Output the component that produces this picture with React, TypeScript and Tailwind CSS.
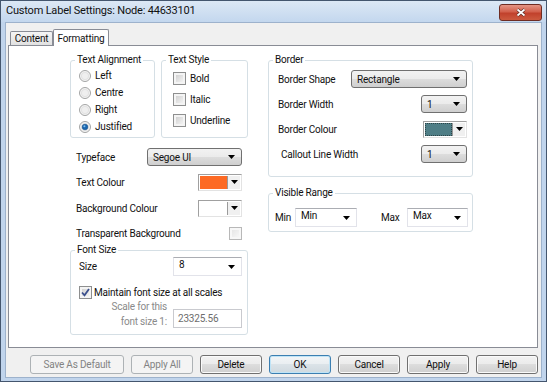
import React from "react";

const combo =
  "border border-[#707070] rounded-[3px] bg-[linear-gradient(#f2f2f2_0%,#ebebeb_50%,#dddddd_50%,#cfcfcf_100%)]";

const Arrow = () => (
  <svg width="7" height="4" viewBox="0 0 7 4" className="shrink-0">
    <path d="M0 0h7L3.5 4z" fill="#000" />
  </svg>
);

const Combo = ({ value, className }: { value: string; className: string }) => (
  <div className={`h-[18px] flex items-center justify-between pl-[5px] pr-[6px] ${combo} ${className}`}>
    <span>{value}</span>
    <Arrow />
  </div>
);

// editable combo: white box, text sits high
const EditCombo = ({ value, className }: { value: string; className: string }) => (
  <div className={`h-[19px] flex justify-between pl-[5px] pr-[6px] bg-white border border-[#e2e3ea] border-t-[#abadb3] ${className}`}>
    <span className="leading-[14px]">{value}</span>
    <div className="flex items-center">
      <Arrow />
    </div>
  </div>
);

const ColourCombo = ({ swatch }: { swatch: string }) => (
  <div className="w-[44px] h-[17px] flex border border-[#a0a0a0] border-r-[#e3e3e3] border-b-[#e3e3e3] bg-white p-px">
    <div className={`flex-1 ${swatch}`} />
    <div className="w-[13px] flex items-center justify-center bg-[#f0f0f0] border-l border-[#9a9a9a]">
      <Arrow />
    </div>
  </div>
);

const Radio = ({ checked }: { checked?: boolean }) => (
  <svg width="12" height="12" viewBox="0 0 12 12" className="shrink-0">
    <circle cx="6" cy="6" r="5.5" fill="#f4f4f4" stroke="#a3a4a4" />
    <circle cx="6" cy="6" r="4" fill="#e2e2e2" />
    <circle cx="6" cy="6" r="3" fill="#efefef" />
    {checked && <circle cx="6" cy="6" r="2.8" fill="#1b67b0" stroke="#0d4a87" strokeWidth="0.6" />}
    {checked && <circle cx="5.4" cy="5.3" r="1" fill="#7fc0f0" />}
  </svg>
);

const Check = ({ checked, faded }: { checked?: boolean; faded?: boolean }) => (
  <div
    className={`w-[13px] h-[13px] shrink-0 border p-[2px] ${
      faded ? "border-[#b8b8b8] bg-[#f7f7f7]" : "border-[#8e8f8f] bg-[#f4f4f4]"
    }`}
  >
    <div
      className={`w-full h-full relative ${
        faded ? "bg-[linear-gradient(135deg,#e6e6e6,#f6f6f6)]" : "bg-[linear-gradient(135deg,#d2d2d2,#f2f2f2)]"
      }`}
    >
      {checked && (
        <svg width="11" height="11" viewBox="0 0 11 11" className="absolute -left-[2px] -top-[2px]">
          <path d="M2 5.5l2.5 2.8L9 2" fill="none" stroke="#3a4f8c" strokeWidth="1.8" />
        </svg>
      )}
    </div>
  </div>
);

const Group = ({ title, className, children }: { title: string; className: string; children: React.ReactNode }) => (
  <fieldset className={`border border-[#d5dfe5] rounded-[3px] ${className}`}>
    <legend className="ml-[4px] px-[2px] leading-[14px]">{title}</legend>
    {children}
  </fieldset>
);

const Btn = ({ label, className, kind }: { label: string; className: string; kind?: "off" | "default" }) => {
  let look = `${combo} shadow-[inset_0_0_0_1px_#fafafa]`;
  if (kind === "off") look = "border border-[#adb2b5] rounded-[3px] bg-[#f4f4f4] text-[#838383]";
  if (kind === "default")
    look =
      "border border-[#3c7fb1] rounded-[3px] bg-[linear-gradient(#f2f5f7_0%,#e9eef1_50%,#dbe3e8_50%,#cfd9df_100%)] shadow-[inset_0_0_0_1px_#bfe4f7]";
  return <div className={`h-[19px] flex items-center justify-center ${look} ${className}`}>{label}</div>;
};

export default function App() {
  return (
    <div className="w-[547px] h-[382px] flex flex-col bg-[#c0d4ec] border border-[#44566e] font-['Roboto',sans-serif] text-[10px] tracking-[-0.2px] text-[#111]">
      {/* title bar */}
      <div className="h-[21px] flex items-center justify-between pl-[5px] pr-[4px] bg-[linear-gradient(#dce8f5,#c3d7ee)]">
        <span className="text-[11px]">Custom Label Settings: Node: 44633101</span>
        <div className="w-[43px] h-[17px] mt-[2px] flex items-center justify-center rounded-[3px] border border-[#6e2c22] bg-[linear-gradient(#e49585_0%,#d2604c_45%,#c1412c_55%,#cc5a3f_100%)]">
          <svg width="10" height="9" viewBox="0 0 10 9">
            <path d="M1.5 1.5l7 6M8.5 1.5l-7 6" stroke="#5a2a22" strokeWidth="3" />
            <path d="M1.5 1.5l7 6M8.5 1.5l-7 6" stroke="#fff" strokeWidth="1.7" />
          </svg>
        </div>
      </div>

      <div className="flex-1 mx-[4px] mb-[3px] flex flex-col bg-[#f0f0f0] border border-[#9db2cc] pl-[2px] pr-[3px] pt-[6px]">
        {/* tabs */}
        <div className="h-[16px] flex items-end ml-[2px]">
          <div className="w-[43px] h-[14px] flex items-center justify-center border border-b-0 border-[#898c95] rounded-t-[2px] bg-[linear-gradient(#f5f5f5,#e1e1e1)]">
            Content
          </div>
          <div className="w-[56px] h-[17px] -mb-px relative z-10 flex items-center justify-center border border-b-0 border-[#898c95] rounded-t-[2px] bg-white">
            Formatting
          </div>
        </div>

        <div className="h-[303px] border border-[#898c95] bg-white flex gap-[20px] pl-[61px] pt-[7px]">
          {/* left column */}
          <div className="w-[178px] flex flex-col">
            <div className="flex gap-[6px]">
              <Group title="Text Alignment" className="w-[85px]">
                <div className="pl-[8px] pb-[2px]">
                  {["Left", "Centre", "Right", "Justified"].map((l) => (
                    <div key={l} className="h-[17px] flex items-center gap-[4px]">
                      <Radio checked={l === "Justified"} />
                      <span>{l}</span>
                    </div>
                  ))}
                </div>
              </Group>
              <Group title="Text Style" className="w-[87px]">
                <div className="pl-[11px] pt-[1px] pb-[6px]">
                  {["Bold", "Italic", "Underline"].map((l) => (
                    <div key={l} className="h-[21px] flex items-center gap-[4px]">
                      <Check />
                      <span>{l}</span>
                    </div>
                  ))}
                </div>
              </Group>
            </div>

            <div className="px-[6px]">
              <div className="mt-[10px] h-[18px] flex items-center justify-between">
                <span>Typeface</span>
                <Combo value="Segoe UI" className="w-[95px]" />
              </div>
              <div className="mt-[7px] h-[18px] flex items-center justify-between">
                <span>Text Colour</span>
                <ColourCombo swatch="bg-[#fd6a24]" />
              </div>
              <div className="mt-[8px] h-[18px] flex items-center justify-between">
                <span>Background Colour</span>
                <ColourCombo swatch="bg-white" />
              </div>
              <div className="mt-[9px] h-[14px] flex items-center justify-between">
                <span>Transparent Background</span>
                <Check faded />
              </div>
            </div>

            <Group title="Font Size" className="mt-[3px]">
              <div className="pl-[8px] pr-[5px] pb-[6px]">
                <div className="h-[19px] flex items-center justify-between">
                  <span>Size</span>
                  <EditCombo value="8" className="w-[69px]" />
                </div>
                <div className="mt-[10px] h-[13px] flex items-center gap-[2px]">
                  <Check checked />
                  <span>Maintain font size at all scales</span>
                </div>
                <div className="mt-[10px] h-[19px] flex justify-end gap-[6px]">
                  <div className="-mt-[10px] text-right leading-[15px] text-[#8a8a8a]">
                    Scale for this
                    <br />
                    font size 1:
                  </div>
                  <div className="w-[69px] h-[19px] flex items-center pl-[4px] border border-[#c9cacf] text-[#6d6d6d]">
                    23325.56
                  </div>
                </div>
              </div>
            </Group>
          </div>

          {/* right column */}
          <div className="w-[205px] flex flex-col">
            <Group title="Border" className="">
              <div className="pl-[9px] pr-[5px] pt-[3px] pb-[13px] flex flex-col gap-[7px]">
                <div className="h-[18px] flex items-center justify-between">
                  <span>Border Shape</span>
                  <Combo value="Rectangle" className="w-[116px]" />
                </div>
                <div className="h-[18px] flex items-center justify-between">
                  <span>Border Width</span>
                  <Combo value="1" className="w-[46px]" />
                </div>
                <div className="h-[18px] flex items-center justify-between">
                  <span>Border Colour</span>
                  <ColourCombo swatch="bg-[#4f7e86] outline outline-1 outline-dotted outline-[#2d4448] -outline-offset-1" />
                </div>
                <div className="h-[18px] flex items-center justify-between">
                  <span className="ml-[3px]">Callout Line Width</span>
                  <Combo value="1" className="w-[46px]" />
                </div>
              </div>
            </Group>

            <Group title="Visible Range" className="mt-[9px]">
              <div className="pl-[6px] pt-[8px] pb-[4px] flex items-center">
                <span className="w-[20px]">Min</span>
                <EditCombo value="Min" className="w-[62px]" />
                <span className="ml-[24px] w-[26px]">Max</span>
                <EditCombo value="Max" className="w-[61px]" />
              </div>
            </Group>
          </div>
        </div>

        {/* buttons */}
        <div className="mt-[7px] flex justify-end gap-[7px]">
          <Btn label="Save As Default" kind="off" className="w-[94px]" />
          <Btn label="Apply All" kind="off" className="w-[62px]" />
          <Btn label="Delete" className="w-[62px]" />
          <Btn label="OK" kind="default" className="w-[62px]" />
          <Btn label="Cancel" className="w-[62px]" />
          <Btn label="Apply" className="w-[62px]" />
          <Btn label="Help" className="w-[62px]" />
        </div>
      </div>
    </div>
  );
}
